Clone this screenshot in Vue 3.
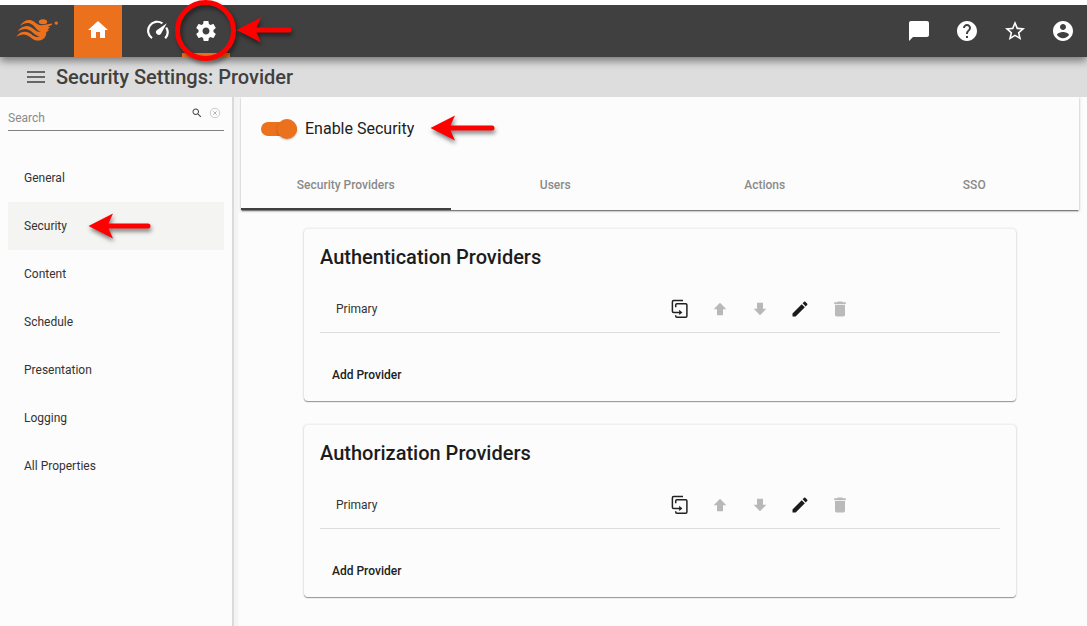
<script setup>
const menu = ['General', 'Security', 'Content', 'Schedule', 'Presentation', 'Logging', 'All Properties']
const tabs = ['Security Providers', 'Users', 'Actions', 'SSO']
const cards = ['Authentication Providers', 'Authorization Providers']
const arrowEnds = [53, 60, 62]
const rightIcons = [
  'M20 2H4c-1.1 0-2 .9-2 2v18l4-4h14c1.1 0 2-.9 2-2V4c0-1.1-.9-2-2-2z',
  'M12 2C6.48 2 2 6.48 2 12s4.48 10 10 10 10-4.48 10-10S17.52 2 12 2zm1 17h-2v-2h2v2zm2.07-7.75l-.9.92C13.45 12.9 13 13.5 13 15h-2v-.5c0-1.1.45-2.1 1.17-2.83l1.24-1.26c.37-.36.59-.86.59-1.41 0-1.1-.9-2-2-2s-2 .9-2 2H8c0-2.21 1.79-4 4-4s4 1.79 4 4c0 .88-.36 1.68-.93 2.25z',
  'M22 9.24l-7.19-.62L12 2 9.19 8.63 2 9.24l5.46 4.73L5.82 21 12 17.27 18.18 21l-1.63-7.03L22 9.24zM12 15.4l-3.76 2.27 1-4.28-3.32-2.88 4.38-.38L12 6.1l1.71 4.04 4.38.38-3.32 2.88 1 4.28L12 15.4z',
  'M12 2C6.48 2 2 6.48 2 12s4.48 10 10 10 10-4.48 10-10S17.52 2 12 2zm0 3c1.66 0 3 1.34 3 3s-1.34 3-3 3-3-1.34-3-3 1.34-3 3-3zm0 14.2c-2.5 0-4.71-1.28-6-3.22.03-1.99 4-3.08 6-3.08 1.99 0 5.97 1.09 6 3.08-1.29 1.94-3.5 3.22-6 3.22z',
]
</script>

<template>
  <div class="page">
    <nav class="topbar">
      <div class="brand">
        <svg width="44" height="26" viewBox="0 0 44 26">
          <g fill="#ec711c">
            <path d="M4 8C8 1.5 14 .8 18 3.6C20.5 5.6 22 7.5 26 7.3L36 5.4L36.3 6.6L31.8 9L34.2 9.2L31.5 11.6L33.2 12L30.3 14.2C30.5 19 27 22.5 22 22.6C16.5 22.6 15 18.7 11 17.2C7 15.8 4 17 .2 18.8C3 14.4 8 12.4 12.5 14.6C16 16.3 17 18.6 21 19L24 18.2C19 17.9 17.5 14.3 13.5 12.2C9.5 10 6 10.6 1.6 13.6C4.5 8.5 10.5 6.5 15 9.2C18.5 11.3 20 14 25 13.8C20.5 12.6 19.8 9 16 6.4C12 3.9 8.5 4.8 4 8Z" />
            <ellipse cx="27" cy="3.7" rx="4.2" ry="2.5" />
            <circle cx="40.3" cy="5.1" r="1.7" />
          </g>
        </svg>
      </div>
      <div class="tab home">
        <svg width="24" height="24" viewBox="0 0 24 24"><path d="M10 20v-6h4v6h5v-8h3L12 3 2 12h3v8z" /></svg>
      </div>
      <div class="tab gauge">
        <svg width="24" height="24" viewBox="0 0 24 24">
          <path d="M6 19.2A8.8 8.8 0 0 1 16.4 4.4M20.2 8.5A9 9 0 0 1 19.2 19.2" fill="none" stroke="#fff" stroke-width="2.2" />
          <path d="M20.8 4.2L15 14.8A2.8 2.8 0 1 1 10.7 11.2Z" />
        </svg>
      </div>
      <div class="tab active">
        <svg width="24" height="24" viewBox="0 0 24 24"><path d="M19.43 12.98c.04-.32.07-.64.07-.98s-.03-.66-.07-.98l2.11-1.65c.19-.15.24-.42.12-.64l-2-3.46c-.12-.22-.39-.3-.61-.22l-2.49 1c-.52-.4-1.08-.73-1.69-.98l-.38-2.65C14.46 2.18 14.25 2 14 2h-4c-.25 0-.46.18-.49.42l-.38 2.65c-.61.25-1.17.59-1.69.98l-2.49-1c-.23-.09-.49 0-.61.22l-2 3.46c-.13.22-.07.49.12.64l2.11 1.65c-.04.32-.07.65-.07.98s.03.66.07.98l-2.11 1.65c-.19.15-.24.42-.12.64l2 3.46c.12.22.39.3.61.22l2.49-1c.52.4 1.08.73 1.69.98l.38 2.65c.03.24.24.42.49.42h4c.25 0 .46-.18.49-.42l.38-2.65c.61-.25 1.17-.59 1.69-.98l2.49 1c.23.09.49 0 .61-.22l2-3.46c.12-.22.07-.49-.12-.64l-2.11-1.65zM12 15.5c-1.93 0-3.5-1.57-3.5-3.5s1.57-3.5 3.5-3.5 3.5 1.57 3.5 3.5-1.57 3.5-3.5 3.5z" /></svg>
      </div>
      <div class="right">
        <div v-for="d in rightIcons" :key="d" class="tab">
          <svg width="24" height="24" viewBox="0 0 24 24"><path :d="d" /></svg>
        </div>
      </div>
    </nav>

    <header class="heading">
      <svg width="24" height="24" viewBox="0 0 24 24"><path d="M3 7h18M3 12h18M3 17h18" stroke="#666" stroke-width="2" /></svg>
      <h1>Security Settings: Provider</h1>
    </header>

    <div class="body">
      <aside class="sidebar">
        <div class="search">
          <span>Search</span>
          <svg class="magnifier" width="12" height="12" viewBox="0 0 24 24"><path d="M15.5 14h-.79l-.28-.27C15.41 12.59 16 11.11 16 9.5 16 5.91 13.09 3 9.5 3S3 5.91 3 9.5 5.91 16 9.5 16c1.61 0 3.09-.59 4.23-1.57l.27.28v.79l5 4.99L20.49 19l-4.99-5zm-6 0C7.01 14 5 11.99 5 9.5S7.01 5 9.5 5 14 7.01 14 9.5 11.99 14 9.5 14z" fill="#444" /></svg>
          <svg class="clear" width="12" height="12" viewBox="0 0 12 12"><circle cx="6" cy="6" r="4.7" fill="none" stroke="#c4c4c4" stroke-width=".9" /><path d="M4.3 4.3l3.4 3.4M7.7 4.3L4.3 7.7" stroke="#aaa" stroke-width=".9" /></svg>
        </div>
        <ul>
          <li v-for="item in menu" :key="item" :class="{ selected: item === 'Security' }">{{ item }}</li>
        </ul>
      </aside>

      <main>
        <section class="panel">
          <div class="enable"><span class="switch"><i></i></span><span class="label">Enable Security</span></div>
          <div class="tabs">
            <div v-for="(t, i) in tabs" :key="t" :class="{ current: i === 0 }">{{ t }}</div>
          </div>
        </section>
        <section v-for="c in cards" :key="c" class="card">
          <h2>{{ c }}</h2>
          <div class="row">
            <span class="name">Primary</span>
            <svg width="20" height="20" viewBox="0 0 20 20"><path d="M5.5 13.4H3.6Q2.4 13.4 2.4 12.2V2.8Q2.4 1.6 3.6 1.6H13M5.7 8.3V6Q5.7 4.8 6.9 4.8H15.7Q16.9 4.8 16.9 6V17Q16.9 18.2 15.7 18.2H6.9Q5.7 18.2 5.7 17V16.2M5.5 13.4H10" fill="none" stroke="#212121" stroke-width="1.5" /><path d="M9.2 10.7L12.4 13.4L9.2 16Z" fill="#212121" /></svg>
            <svg width="20" height="20" viewBox="0 0 20 20"><path d="M10 3.7L16.3 10.2H13V16.3H7V10.2H3.7Z" fill="#b8b8b8" /></svg>
            <svg width="20" height="20" viewBox="0 0 20 20"><path d="M10 16.3L3.7 9.8H7V3.7H13V9.8H16.3Z" fill="#b8b8b8" /></svg>
            <svg width="20" height="20" viewBox="0 0 24 24"><path d="M3 17.25V21h3.75L17.81 9.94l-3.75-3.75L3 17.25zM20.71 7.04c.39-.39.39-1.02 0-1.41l-2.34-2.34c-.39-.39-1.02-.39-1.41 0l-1.83 1.83 3.75 3.75 1.83-1.83z" fill="#1b1b1b" /></svg>
            <svg width="20" height="20" viewBox="0 0 24 24"><path d="M6 19c0 1.1.9 2 2 2h8c1.1 0 2-.9 2-2V7H6v12zM19 4h-3.5l-1-1h-5l-1 1H5v2h14V4z" fill="#bababa" /></svg>
          </div>
          <div class="add">Add Provider</div>
        </section>
      </main>
    </div>

    <div class="ring"></div>
    <svg v-for="(end, i) in arrowEnds" :key="i" class="arrow" :class="'arrow-' + (i + 1)" width="68" height="28" viewBox="0 0 68 28">
      <path :d="`M.5 14L25 1.5L20.5 11.5H${end}A2.5 2.5 0 0 1 ${end} 16.5H20.5L25 26.5Z`" fill="#f00" />
    </svg>
  </div>
</template>

<style>
body { margin: 0; overflow: hidden; background: #fcfcfc; }
</style>

<style scoped>
* { box-sizing: border-box; }
.page { position: relative; height: 626px; display: flex; flex-direction: column; padding-top: 5px; background: #fff; font-family: Roboto, "Liberation Sans", sans-serif; overflow: hidden; color: #212121; }
svg { display: block; flex: none; }
.topbar { height: 52px; flex: none; display: flex; background: #404040; z-index: 1; box-shadow: 0 4px 8px rgba(0,0,0,.45); clip-path: inset(0 0 -16px 0); }
.brand { width: 74px; padding: 13px 0 0 16px; }
.tab { width: 48px; height: 52px; display: flex; align-items: center; justify-content: center; fill: #fff; }
.home { background: #ec711c; }
.home svg { margin-bottom: 2px; }
.gauge { margin-left: 12px; }
.active { border-bottom: 4px solid #ec711c; padding-top: 4px; }
.right { margin-left: auto; display: flex; }
.heading { height: 40px; flex: none; display: flex; align-items: center; padding-left: 24px; background: #ddd; gap: 8px; }
h1 { margin: 0; font-size: 20px; font-weight: 500; line-height: 24px; color: #404040; }
.body { flex: 1; display: flex; background: #fcfcfc; min-height: 0; }
.sidebar { width: 232px; flex: none; padding: 0 8px; background: #fcfcfc; box-shadow: 2px 0 0 #dadada, 6px 0 1px #f4f4f3; clip-path: inset(0 -8px 0 0); }
.search { height: 34px; border-bottom: 1px solid #808080; display: flex; font-size: 12px; line-height: 14px; color: #8a8a8a; }
.search span { padding-top: 14px; flex: 1; }
.magnifier { margin: 10px 6px 0 0; }
.clear { margin: 10px 3px 0 0; }
ul { list-style: none; margin: 23px 0 0; padding: 0; }
li { height: 48px; padding-left: 16px; line-height: 49px; font-size: 12px; color: #333; }
.selected { background: #f4f4f2; }
main { flex: 1; padding: 0 8px 0 9px; min-width: 0; }
.panel { height: 113px; background: #fcfcfc; box-shadow: 0 2px 1px -1px rgba(0,0,0,.35), 0 1px 2px rgba(0,0,0,.32), 0 0 3px 3px rgba(0,0,0,.02); clip-path: inset(0 -6px -6px -6px); }
.enable { height: 64px; display: flex; align-items: center; gap: 8px; padding-left: 20px; font-size: 16px; }
.label { margin-top: -2px; }
.switch { width: 36px; height: 14px; border-radius: 7px; background: #ec711c; display: flex; align-items: center; justify-content: flex-end; }
.switch i { width: 20px; height: 20px; border-radius: 50%; background: #ec711c; box-shadow: 0 1px 2px rgba(0,0,0,.25); }
.tabs { display: flex; height: 49px; }
.tabs div { flex: 1; text-align: center; font-size: 12px; font-weight: 500; line-height: 48px; color: #8a8a8a; border-bottom: 2px solid transparent; }
.tabs .current { border-bottom-color: #404040; }
.card { width: 712px; height: 172px; margin: 19px 0 24px 63px; padding: 16px; border-radius: 4px; background: #fcfcfc; box-shadow: 0 1px 1px rgba(0,0,0,.38), 0 0 1px 2px rgba(0,0,0,.025), 0 0 2px rgba(0,0,0,.1); }
h2 { margin: 0; font-size: 20px; font-weight: 500; line-height: 24px; color: #1c1c1c; }
.row { height: 48px; margin-top: 16px; border-bottom: 1px solid #ddd; display: flex; align-items: center; gap: 20px; padding: 1px 150px 0 16px; font-size: 12px; color: #333; }
.name { margin-right: auto; }
.add { margin: 35px 0 0 12px; font-size: 12px; font-weight: 500; line-height: 14px; color: #212121; }
.ring { position: absolute; z-index: 2; left: 175px; top: 0; width: 61px; height: 61px; border: 5px solid #f00; border-radius: 50%; filter: drop-shadow(2px 3px 2px rgba(0,0,0,.45)); }
.arrow { position: absolute; z-index: 2; filter: drop-shadow(1px 3px 2px rgba(0,0,0,.5)); }
.arrow-1 { left: 236px; top: 16px; }
.arrow-2 { left: 88px; top: 212px; }
.arrow-3 { left: 430px; top: 114px; }
</style>
